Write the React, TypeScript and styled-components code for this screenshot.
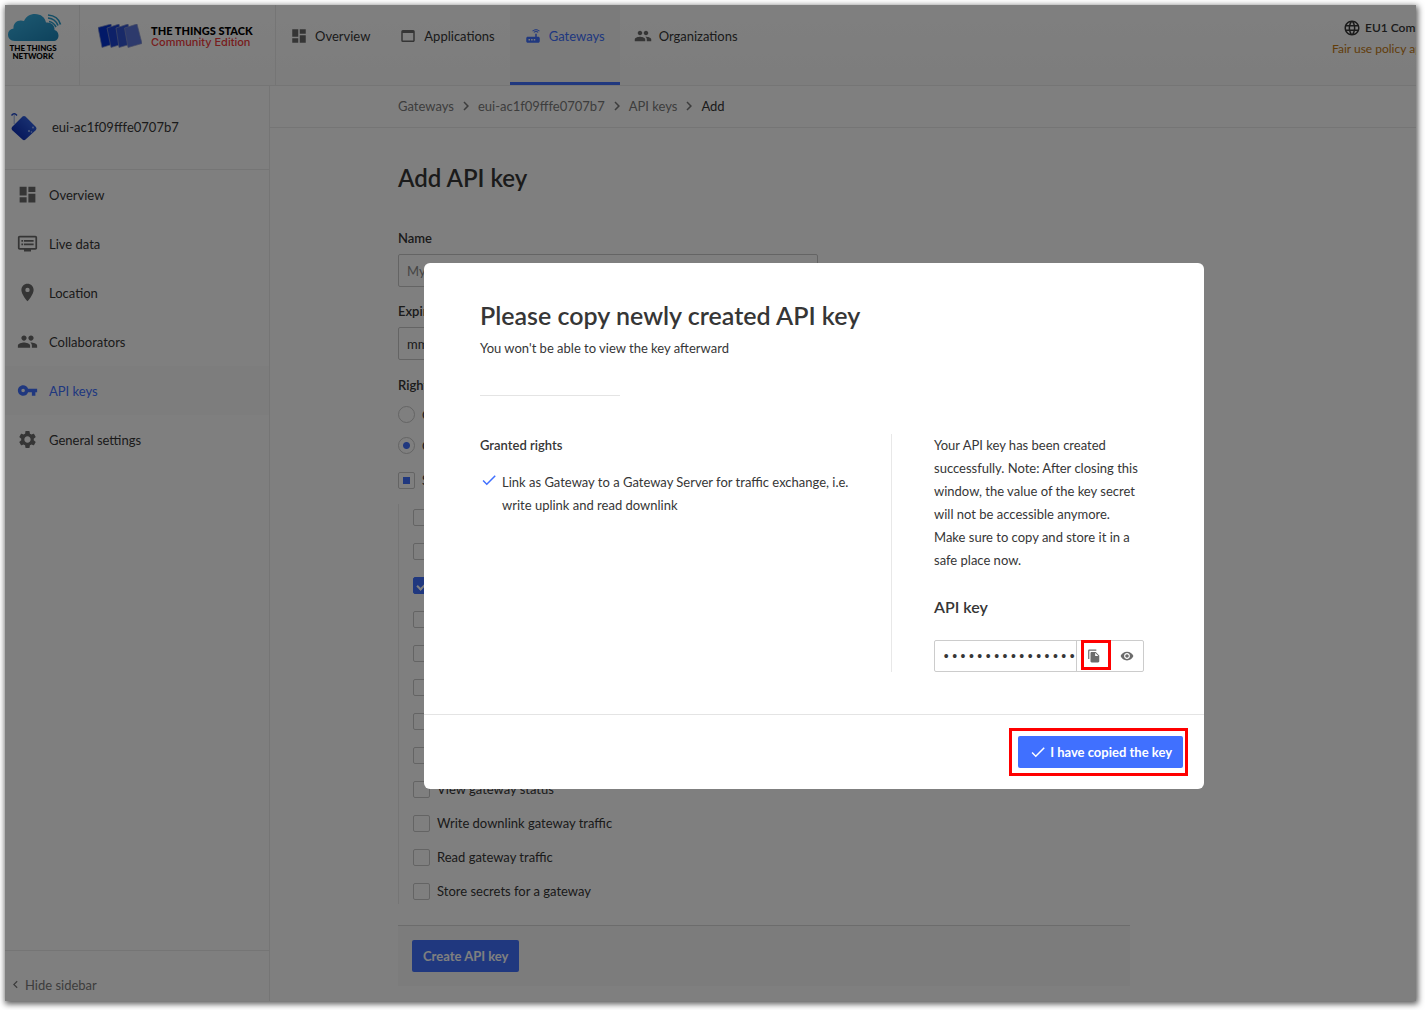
import React from 'react';
import styled, { createGlobalStyle, css } from 'styled-components';
import {
  MdDashboard, MdWebAsset, MdRouter, MdPeople, MdDvr, MdLocationOn, MdVpnKey, MdSettings,
  MdChevronRight, MdChevronLeft, MdLanguage, MdFileCopy, MdRemoveRedEye, MdCheck,
} from 'react-icons/md';

const c = {
  text: '#363636',
  subtle: '#7a7a7a',
  icon: '#6b6b6b',
  line: '#ebebeb',
  field: '#c8c8c8',
  blue: '#4070ff',
  red: '#ff0000',
};

const Global = createGlobalStyle`
  * { box-sizing: border-box; }
  body { margin: 0; background: #fff; font: 13px/20px Lato, "Noto Sans", sans-serif; color: ${c.text}; }
  h1, h2, h3, p, ul { margin: 0; padding: 0; }
  ul { list-style: none; }
  a { color: inherit; text-decoration: none; }
  button, input { font: inherit; color: inherit; }
  svg { flex: none; display: block; }
`;

const Page = styled.div`padding: 5px 9px 9px 5px; height: 100vh;`;
const Frame = styled.div`
  position: relative;
  height: 100%;
  overflow: hidden;
  display: flex;
  flex-direction: column;
  background: #fff;
  box-shadow: 1px 2px 6px 1px rgba(0, 0, 0, 0.65);
`;

const Header = styled.header`
  flex: none;
  display: flex;
  height: 81px;
  border-bottom: 1px solid ${c.line};
  background: linear-gradient(#fff, #fafafa);
`;
const NetworkLogo = styled.a`
  flex: none;
  width: 75px;
  padding: 8px 0 0 2px;
  border-right: 1px solid ${c.line};
  color: #000;
`;
const NetworkName = styled.div`
  width: 52px;
  font: 900 8px/8px Lato, sans-serif;
  text-align: center;
`;
const StackLogo = styled.a`
  flex: none;
  display: flex;
  gap: 9px;
  width: 196px;
  padding: 19px 0 0 18px;
  border-right: 1px solid ${c.line};
  white-space: nowrap;
`;
const StackName = styled.div`font: 900 11px/13px Lato, sans-serif; color: #000;`;
const Edition = styled.div`font: 500 11px/11px Inter, sans-serif; color: #f03a3a;`;

const TopNav = styled.nav`flex: 1; display: flex;`;
const TopLink = styled.a<{ $active?: boolean }>`
  display: flex;
  gap: 7px;
  padding: 21px 15px 0 14px;
  & > svg { margin-top: 1px; color: ${c.icon}; }
  ${(p) => p.$active && css`
    color: ${c.blue};
    background: #f6f6f6;
    border-bottom: 3px solid ${c.blue};
    & > svg { color: ${c.blue}; }
  `}
`;
const Cluster = styled.div`flex: none; width: 84px; padding-top: 13px; white-space: nowrap;`;
const ClusterName = styled.div`
  display: flex;
  align-items: center;
  gap: 4px;
  padding-left: 11px;
  font-size: 12px;
  font-weight: 600;
`;
const Policy = styled.a`display: block; font-size: 12px; line-height: 22px; color: #c47a12;`;

const Body = styled.div`flex: 1; min-height: 0; display: flex;`;
const Sidebar = styled.aside`
  flex: none;
  width: 265px;
  display: flex;
  flex-direction: column;
  border-right: 1px solid ${c.line};
`;
const Entity = styled.div`
  display: flex;
  align-items: center;
  gap: 14px;
  height: 84px;
  padding: 0 0 2px 5px;
  border-bottom: 1px solid ${c.line};
`;
const SideNav = styled.nav`flex: 1;`;
const SideLink = styled.a<{ $active?: boolean }>`
  display: flex;
  align-items: center;
  gap: 11px;
  height: 49px;
  padding-left: 12px;
  color: ${(p) => (p.$active ? c.blue : c.text)};
  background: ${(p) => (p.$active ? '#fafafa' : 'none')};
  & > svg { color: ${(p) => (p.$active ? c.blue : c.icon)}; }
`;
const HideButton = styled.button`
  display: flex;
  align-items: center;
  gap: 2px;
  height: 51px;
  padding: 17px 0 0 3px;
  border: 0;
  border-top: 1px solid ${c.line};
  background: none;
  color: ${c.subtle};
`;

const Main = styled.main`flex: 1; min-width: 0;`;
const Crumbs = styled.nav`
  display: flex;
  align-items: center;
  gap: 3px;
  height: 42px;
  padding: 0 0 2px 128px;
  border-bottom: 1px solid ${c.line};
  color: ${c.subtle};
  & > span { color: ${c.text}; }
`;
const Form = styled.form`max-width: 860px; padding: 33px 0 0 128px;`;
const Title = styled.h1`font-size: 24px; line-height: 34px; font-weight: 600;`;
const Field = styled.div`
  margin-top: 14px;
  & > label { display: block; padding-bottom: 6px; font-weight: 600; }
  ${Title} + & { margin-top: 33px; }
`;
const TextInput = styled.input`
  display: block;
  width: 420px;
  max-width: 100%;
  height: 33px;
  padding: 0 8px;
  border: 1px solid ${c.field};
  border-radius: 2px;
  background: #fff;
  &::placeholder { color: #8a8a8a; opacity: 1; }
`;
const Rights = styled.fieldset`
  margin: 15px 0 0;
  padding: 0;
  border: 0;
  & > legend { padding: 0 0 4px; font-weight: 600; }
`;
const Choice = styled.label<{ $height: number }>`
  display: flex;
  align-items: center;
  gap: 7px;
  height: ${(p) => p.$height}px;
`;
const Radio = styled.input`
  appearance: none;
  width: 17px;
  height: 17px;
  margin: 0;
  border: 1px solid ${c.field};
  border-radius: 50%;
  background: #fff;
  &:checked { background: radial-gradient(circle, ${c.blue} 3px, #fff 4px); }
`;
const Box = styled.input<{ $partial?: boolean }>`
  appearance: none;
  width: 17px;
  height: 17px;
  margin: 0;
  border: 1px solid ${c.field};
  border-radius: 2px;
  background: #fff;
  ${(p) => p.$partial && css`
    padding: 4px;
    background: ${c.blue} content-box;
  `}
  &:checked {
    display: grid;
    place-items: center;
    border-color: ${c.blue};
    background: ${c.blue};
  }
  &:checked::after {
    content: '';
    width: 8px;
    height: 4px;
    border: solid #fff;
    border-width: 0 0 2px 2px;
    transform: rotate(-45deg);
  }
`;
const RightsList = styled.ul`
  display: grid;
  gap: 8px;
  margin-top: 5px;
  padding-left: 14px;
  border-left: 1px solid ${c.line};
`;
const FormFooter = styled.div`
  margin-top: 21px;
  padding: 14px;
  border-top: 1px solid #d8d8d8;
  background: #f9f9f9;
`;
const Button = styled.button`
  display: flex;
  align-items: center;
  gap: 3px;
  height: 32px;
  padding: 0 11px;
  border: 0;
  border-radius: 2px;
  background: ${c.blue};
  color: #fff;
  font-weight: 700;
  white-space: nowrap;
`;

const Overlay = styled.div`
  position: absolute;
  inset: 0 -207px -46px 0;
  display: grid;
  place-items: center;
  background: rgba(0, 0, 0, 0.5);
`;
const Modal = styled.section`
  width: 780px;
  border-radius: 6px;
  background: #fff;
`;
const ModalBody = styled.div`padding: 35px 60px 42px 56px;`;
const ModalTitle = styled.h2`font-size: 25px; line-height: 34px; font-weight: 600;`;
const Subtitle = styled.p`padding-top: 6px;`;
const Rule = styled.hr`
  width: 140px;
  height: 1px;
  margin: 37px 0 38px;
  border: 0;
  background: #e4e4e4;
`;
const Columns = styled.div`
  display: grid;
  grid-template-columns: 1fr 210px;
  gap: 42px;
  line-height: 23px;
`;
const Granted = styled.div`
  padding-right: 36px;
  border-right: 1px solid #e8e8e8;
  & > h3 { font-size: 13px; font-weight: 600; }
`;
const GrantedItem = styled.li`
  display: flex;
  gap: 4px;
  padding-top: 14px;
  & > svg { color: ${c.blue}; }
`;
const KeyLabel = styled.label`
  display: block;
  padding: 23px 0 21px;
  font-size: 16px;
  line-height: 24px;
  font-weight: 600;
`;
const KeyField = styled.div`
  display: flex;
  height: 32px;
  border: 1px solid #ccc;
  border-radius: 2px;
`;
const KeyInput = styled.input`
  flex: 1;
  min-width: 0;
  padding: 2px 0 0 7px;
  border: 0;
  border-right: 1px solid #ccc;
  background: none;
  font-family: "Liberation Mono", monospace;
  font-size: 14px;
  outline: 0;
`;
const IconButton = styled.button`
  position: relative;
  display: grid;
  place-items: center;
  width: 33px;
  padding: 0;
  border: 0;
  background: none;
  color: ${c.icon};
`;
const ModalFooter = styled.footer`
  display: flex;
  justify-content: flex-end;
  padding: 21px;
  border-top: 1px solid #e4e4e4;
`;
const Marked = styled.div`position: relative;`;
const Highlight = styled.span<{ $inset: string }>`
  position: absolute;
  inset: ${(p) => p.$inset};
  border: 3px solid ${c.red};
  pointer-events: none;
`;

const CloudLogo = () => (
  <svg width="56" height="31" viewBox="0 0 56 31">
    <defs>
      <linearGradient id="cloud" x1="0" y1="0" x2="1" y2="1">
        <stop offset="0" stopColor="#3cb5e6" />
        <stop offset="1" stopColor="#1c84b8" />
      </linearGradient>
    </defs>
    <path fill="url(#cloud)" d="M8 28C3 28 1 25 1 21.500C1 18 3 16 6.500 15.500C6 10 11 6 17 8C19 3.500 23 1 28 1C34 1 38 4.500 39 9.500C44 9 48 12 47.500 17C50 17.500 51.500 20 51.500 22.500C51.500 26 49.500 28 46 28Z" />
    <g fill="none" stroke="#2b9dcc" strokeWidth="1.700">
      <path d="M42 8.500C45 9 47.500 11 49 14" />
      <path d="M41 5C46 5.500 49.500 8.500 51 12.500" />
      <path d="M41 2C48 2.500 52 6 53.500 11.500" />
    </g>
  </svg>
);
const CardsLogo = () => (
  <svg width="44" height="24" viewBox="0 0 44 24">
    <g stroke="#8c98c8" strokeWidth="0.700">
      <path fill="#0532d0" d="M0 3.500L13 0L17 19.500L4 23.500Z" />
      <path fill="#1c43d0" d="M9 4L21 0L26 19.500L13 23.500Z" />
      <path fill="#3355d0" d="M18 4L30 0L35 19.500L21 23.500Z" />
      <path fill="#5a74d8" d="M26.500 4L39 0L44 19.500L30 23.500Z" />
    </g>
  </svg>
);
const GatewayLogo = () => (
  <svg width="28" height="30" viewBox="0 0 28 30">
    <defs>
      <linearGradient id="device" x1="1" y1="0" x2="0" y2="1">
        <stop offset="0" stopColor="#3a70f0" />
        <stop offset="1" stopColor="#0520a8" />
      </linearGradient>
    </defs>
    <path fill="url(#device)" d="M12.500 4.500Q14 3.500 15.500 4.500L26 15Q27 16.500 26 18L15.500 27.500Q14 29 12.500 27.500L2 18Q1 16.500 2 15Z" />
    <path fill="none" stroke="#1c45c8" strokeWidth="1.400" d="M1.500 3.500Q4.200 0 7 3.500" />
    <path fill="none" stroke="#6c86d0" strokeWidth="0.700" d="M4.200 2.500V12" />
    <g fill="#a9c0ff">
      <circle cx="19" cy="19" r="1" /><circle cx="21.500" cy="20" r="0.800" /><circle cx="23" cy="15.500" r="0.900" />
    </g>
  </svg>
);

const topLinks = [
  { label: 'Overview', Icon: MdDashboard },
  { label: 'Applications', Icon: MdWebAsset },
  { label: 'Gateways', Icon: MdRouter, active: true },
  { label: 'Organizations', Icon: MdPeople },
];
const sideLinks = [
  { label: 'Overview', Icon: MdDashboard },
  { label: 'Live data', Icon: MdDvr },
  { label: 'Location', Icon: MdLocationOn },
  { label: 'Collaborators', Icon: MdPeople },
  { label: 'API keys', Icon: MdVpnKey, active: true },
  { label: 'General settings', Icon: MdSettings },
];
const rights = [
  'Delete gateway',
  'View gateway information',
  'Link as Gateway to a Gateway Server for traffic exchange',
  'View gateway location',
  'Retrieve secrets',
  'Edit basic gateway settings',
  'Edit gateway API keys',
  'Edit gateway collaborators',
  'View gateway status',
  'Write downlink gateway traffic',
  'Read gateway traffic',
  'Store secrets for a gateway',
];

export default function App() {
  return (
    <Page>
      <Global />
      <Frame>
        <Header>
          <NetworkLogo href="#">
            <CloudLogo />
            <NetworkName>THE THINGS NETWORK</NetworkName>
          </NetworkLogo>
          <StackLogo href="#">
            <CardsLogo />
            <div>
              <StackName>THE THINGS STACK</StackName>
              <Edition>Community Edition</Edition>
            </div>
          </StackLogo>
          <TopNav>
            {topLinks.map(({ label, Icon, active }) => (
              <TopLink key={label} href="#" $active={active}><Icon size={18} />{label}</TopLink>
            ))}
          </TopNav>
          <Cluster>
            <ClusterName><MdLanguage size={18} />EU1 Community</ClusterName>
            <Policy href="#">Fair use policy applies</Policy>
          </Cluster>
        </Header>
        <Body>
          <Sidebar>
            <Entity><GatewayLogo />eui-ac1f09fffe0707b7</Entity>
            <SideNav>
              {sideLinks.map(({ label, Icon, active }) => (
                <SideLink key={label} href="#" $active={active}><Icon size={21} />{label}</SideLink>
              ))}
            </SideNav>
            <HideButton type="button"><MdChevronLeft size={15} />Hide sidebar</HideButton>
          </Sidebar>
          <Main>
            <Crumbs>
              <a href="#">Gateways</a><MdChevronRight size={18} />
              <a href="#">eui-ac1f09fffe0707b7</a><MdChevronRight size={18} />
              <a href="#">API keys</a><MdChevronRight size={18} />
              <span>Add</span>
            </Crumbs>
            <Form>
              <Title>Add API key</Title>
              <Field>
                <label htmlFor="name">Name</label>
                <TextInput id="name" placeholder="My new API key" />
              </Field>
              <Field>
                <label htmlFor="expiry">Expiry date</label>
                <TextInput id="expiry" defaultValue="mm/dd/yyyy" />
              </Field>
              <Rights>
                <legend>Rights</legend>
                <Choice $height={31}><Radio type="radio" name="grant" />Grant all current and future rights</Choice>
                <Choice $height={31}><Radio type="radio" name="grant" defaultChecked />Grant individual rights</Choice>
                <Choice $height={38}><Box type="checkbox" $partial />Select all</Choice>
                <RightsList>
                  {rights.map((label, i) => (
                    <li key={label}>
                      <Choice $height={26}><Box type="checkbox" defaultChecked={i === 2} />{label}</Choice>
                    </li>
                  ))}
                </RightsList>
              </Rights>
              <FormFooter><Button type="button">Create API key</Button></FormFooter>
            </Form>
          </Main>
        </Body>
        <Overlay>
          <Modal role="dialog" aria-labelledby="dialog-title">
            <ModalBody>
              <ModalTitle id="dialog-title">Please copy newly created API key</ModalTitle>
              <Subtitle>You won't be able to view the key afterward</Subtitle>
              <Rule />
              <Columns>
                <Granted>
                  <h3>Granted rights</h3>
                  <ul>
                    <GrantedItem>
                      <MdCheck size={18} />
                      Link as Gateway to a Gateway Server for traffic exchange, i.e. write uplink and read downlink
                    </GrantedItem>
                  </ul>
                </Granted>
                <div>
                  <p>
                    Your API key has been created successfully. Note: After closing this window, the value of the
                    key secret will not be accessible anymore. Make sure to copy and store it in a safe place now.
                  </p>
                  <KeyLabel htmlFor="key">API key</KeyLabel>
                  <KeyField>
                    <KeyInput id="key" readOnly value="••••••••••••••••" />
                    <IconButton type="button" aria-label="Copy">
                      <MdFileCopy size={14} />
                      <Highlight $inset="-1px -1px 1px 4px" />
                    </IconButton>
                    <IconButton type="button" aria-label="Show"><MdRemoveRedEye size={14} /></IconButton>
                  </KeyField>
                </div>
              </Columns>
            </ModalBody>
            <ModalFooter>
              <Marked>
                <Button type="button"><MdCheck size={18} />I have copied the key</Button>
                <Highlight $inset="-8px -5px -8px -9px" />
              </Marked>
            </ModalFooter>
          </Modal>
        </Overlay>
      </Frame>
    </Page>
  );
}
